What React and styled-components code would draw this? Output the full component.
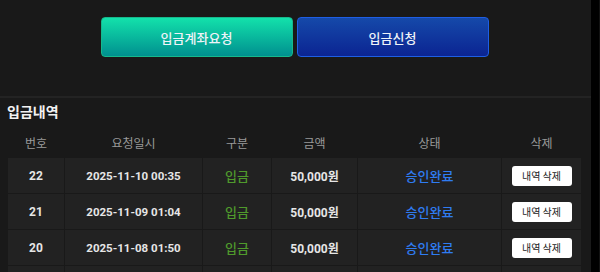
import React from 'react';
import styled, { createGlobalStyle } from 'styled-components';

const GlobalStyle = createGlobalStyle`
  html, body {
    margin: 0;
    padding: 0;
    background: #191919;
    font-family: 'Roboto', 'Noto Sans CJK KR', sans-serif;
  }
`;

const Page = styled.div`
  display: flex;
  width: 600px;
  height: 272px;
  overflow: hidden;
  background: #191919;
`;

const Main = styled.div`
  flex: 1;
  display: flex;
  flex-direction: column;
`;

const ScrollTrack = styled.div`
  width: 10px;
  background: #000;
  border-right: 1px solid #121212;
  box-sizing: border-box;
`;

const ButtonBar = styled.div`
  display: flex;
  justify-content: center;
  gap: 4px;
  padding: 17px 2px 39px 0;
  border-bottom: 2px solid #232323;
`;

const ActionButton = styled.button`
  width: 192px;
  height: 40px;
  border-radius: 4px;
  border: 1px solid ${(p) => p.$border};
  background: linear-gradient(to bottom, ${(p) => p.$top}, ${(p) => p.$bottom});
  color: #eef3f8;
  font-family: 'Noto Sans CJK KR', sans-serif;
  font-size: 13px;
  font-weight: 500;
  padding: 0;
  cursor: pointer;
`;

const Section = styled.div`
  padding: 3px 9px 0 7px;
`;

const Title = styled.h2`
  margin: 0;
  color: #f2f2f2;
  font-family: 'Noto Sans CJK KR', sans-serif;
  font-size: 14px;
  font-weight: 700;
  line-height: 20px;
`;

const Table = styled.table`
  width: 574px;
  border-collapse: collapse;
  table-layout: fixed;
  margin-top: 6px;
`;

const Th = styled.th`
  height: 30px;
  padding: 0;
  color: #9a9a9a;
  font-family: 'Noto Sans CJK KR', sans-serif;
  font-size: 12px;
  font-weight: 400;
  text-align: center;
`;

const Td = styled.td`
  height: 35px;
  padding: 0;
  background: #222222;
  border: 1px solid #191919;
  text-align: center;
  color: ${(p) => p.$color || '#e6e6e6'};
  font-size: ${(p) => p.$size || '12px'};
  font-weight: ${(p) => p.$weight || 700};
`;

const DeleteButton = styled.button`
  width: 60px;
  height: 20px;
  padding: 0;
  border: none;
  border-radius: 3px;
  background: #ffffff;
  color: #1a1a1a;
  font-family: 'Noto Sans CJK KR', sans-serif;
  font-size: 10px;
  cursor: pointer;
`;

const widths = [57, 138, 69, 86, 144, 80];
const headers = ['번호', '요청일시', '구분', '금액', '상태', '삭제'];

const rows = [
  { no: 22, date: '2025-11-10 00:35' },
  { no: 21, date: '2025-11-09 01:04' },
  { no: 20, date: '2025-11-08 01:50' },
  { no: 19, date: '2025-11-07 02:12' },
];

export default function App() {
  return (
    <Page>
      <GlobalStyle />
      <Main>
        <ButtonBar>
          <ActionButton $top="#13e1ab" $bottom="#00908f" $border="#16b98c">
            입금계좌요청
          </ActionButton>
          <ActionButton $top="#1549a9" $bottom="#0b2492" $border="#1e5ee4">
            입금신청
          </ActionButton>
        </ButtonBar>
        <Section>
          <Title>입금내역</Title>
          <Table>
            <colgroup>
              {widths.map((w, i) => (
                <col key={i} style={{ width: w }} />
              ))}
            </colgroup>
            <thead>
              <tr>
                {headers.map((h) => (
                  <Th key={h}>{h}</Th>
                ))}
              </tr>
            </thead>
            <tbody>
              {rows.map((r) => (
                <tr key={r.no}>
                  <Td>{r.no}</Td>
                  <Td $size="11.5px">{r.date}</Td>
                  <Td $color="#4f9a2c" $size="13px" $weight={500}>입금</Td>
                  <Td>50,000원</Td>
                  <Td $color="#2f7cf2" $size="13px" $weight={500}>승인완료</Td>
                  <Td>
                    <DeleteButton>내역 삭제</DeleteButton>
                  </Td>
                </tr>
              ))}
            </tbody>
          </Table>
        </Section>
      </Main>
      <ScrollTrack />
    </Page>
  );
}
